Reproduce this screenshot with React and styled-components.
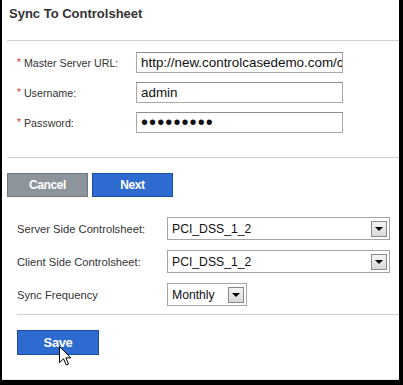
import React from 'react';
import styled, { createGlobalStyle } from 'styled-components';

const GlobalStyle = createGlobalStyle`
  html, body { margin: 0; padding: 0; background: #fff; }
  body { font-family: "Liberation Sans", Arial, sans-serif; color: #333; }
  * { box-sizing: border-box; }
`;

const Frame = styled.div`
  position: relative;
  width: 403px;
  height: 385px;
  border-left: 2px solid #000;
  border-right: 4px solid #000;
  border-bottom: 5px solid #000;
  background: #fff;
  display: flex;
  flex-direction: column;
`;

const Header = styled.div`
  margin-left: 5px;
  padding: 6px 0 18px 2px;
  border-bottom: 1px solid #cfcfcf;
`;

const Title = styled.h1`
  margin: 0;
  font-size: 13px;
  line-height: 16px;
  font-weight: bold;
  color: #333;
`;

const FormSection = styled.div`
  margin-left: 5px;
  padding: 11px 0 24px 10px;
  border-bottom: 1px solid #cfcfcf;
  display: flex;
  flex-direction: column;
  gap: 9px;
`;

const FieldRow = styled.div`
  display: grid;
  grid-template-columns: 119px 207px;
  align-items: center;
  height: 21px;
`;

const Label = styled.label`
  font-size: ${p => p.$fs || 11.2}px;
  color: #333;
  white-space: nowrap;
`;

const Req = styled.span`
  color: #c8342c;
  font-size: 10px;
  margin-right: 3px;
  position: relative;
  top: -1px;
`;

const Field = styled.div`
  height: 21px;
  border: 1px solid #a8a8a8;
  border-top-color: #8e8e8e;
  background: #fff;
  padding-left: 4px;
  overflow: hidden;
  white-space: nowrap;
  color: #111;
  font-size: ${p => (p.$password ? '20px' : '13.4px')};
  letter-spacing: ${p => (p.$password ? '1.1px' : '0')};
  line-height: 19px;
`;

const ButtonBar = styled.div`
  margin-left: 5px;
  padding: 15px 0 20px 0;
  display: flex;
  gap: 4px;
`;

const Button = styled.button`
  width: ${p => p.$w || 81}px;
  height: ${p => p.$h || 24}px;
  padding: 0;
  border: 1px solid ${p => (p.$variant === 'gray' ? '#6f767c' : '#1d4f9e')};
  background: ${p => (p.$variant === 'gray' ? '#8d949b' : '#2d6bd0')};
  color: #fff;
  font-family: "Liberation Sans", Arial, sans-serif;
  font-weight: bold;
  font-size: ${p => p.$fs || 12}px;
  letter-spacing: -0.4px;
  cursor: pointer;
`;

const SelectSection = styled.div`
  margin-left: 15px;
  padding-bottom: 8px;
  border-bottom: 1px solid #cfcfcf;
  display: flex;
  flex-direction: column;
  gap: 10px;
`;

const SelectRow = styled.div`
  display: grid;
  grid-template-columns: 150px auto;
  align-items: center;
  height: 23px;
`;

const SelectBox = styled.div`
  width: ${p => p.$w}px;
  height: 23px;
  border: 1px solid #a5a5a5;
  background: #fff;
  display: flex;
  align-items: center;
  justify-content: space-between;
  padding: 0 2px 0 4px;
  font-size: 12.2px;
  color: #111;
`;

const ArrowBox = styled.span`
  width: 16px;
  height: 16px;
  border: 1px solid #8a8a8a;
  background: linear-gradient(#f4f4f4, #d9d9d9);
  display: flex;
  align-items: center;
  justify-content: center;
  &::after {
    content: '';
    border-left: 4px solid transparent;
    border-right: 4px solid transparent;
    border-top: 4px solid #000;
    margin-top: 1px;
  }
`;

const Footer = styled.div`
  flex: 1;
  padding: 15px 0 0 15px;
  border-bottom: 1px solid #e6e6e6;
`;

const SaveWrap = styled.div`
  position: relative;
  width: 82px;
`;

const Cursor = styled.svg`
  position: absolute;
  left: 42px;
  top: 16px;
  pointer-events: none;
`;

function Select({ value, width }) {
  return (
    <SelectBox $w={width}>
      <span>{value}</span>
      <ArrowBox />
    </SelectBox>
  );
}

export default function App() {
  return (
    <>
      <GlobalStyle />
      <Frame>
        <Header>
          <Title>Sync To Controlsheet</Title>
        </Header>
        <FormSection>
          <FieldRow>
            <Label $fs={10.7}><Req>*</Req>Master Server URL:</Label>
            <Field>http://new.controlcasedemo.com/controlsheet</Field>
          </FieldRow>
          <FieldRow>
            <Label $fs={10.7}><Req>*</Req>Username:</Label>
            <Field>admin</Field>
          </FieldRow>
          <FieldRow>
            <Label $fs={10.7}><Req>*</Req>Password:</Label>
            <Field $password>•••••••••</Field>
          </FieldRow>
        </FormSection>
        <ButtonBar>
          <Button $variant="gray">Cancel</Button>
          <Button>Next</Button>
        </ButtonBar>
        <SelectSection>
          <SelectRow>
            <Label>Server Side Controlsheet:</Label>
            <Select value="PCI_DSS_1_2" width={223} />
          </SelectRow>
          <SelectRow>
            <Label>Client Side Controlsheet:</Label>
            <Select value="PCI_DSS_1_2" width={223} />
          </SelectRow>
          <SelectRow>
            <Label>Sync Frequency</Label>
            <Select value="Monthly" width={80} />
          </SelectRow>
        </SelectSection>
        <Footer>
          <SaveWrap>
            <Button $w={82} $h={25} $fs={13}>Save</Button>
            <Cursor width="13" height="20" viewBox="0 0 13 20">
              <path d="M0.5 0.5 L0.5 16.5 L4.5 12.8 L7.3 19 L9.6 18 L6.9 11.9 L12 11.9 Z" fill="#fff" stroke="#000" strokeWidth="1" strokeLinejoin="miter" />
            </Cursor>
          </SaveWrap>
        </Footer>
      </Frame>
    </>
  );
}
